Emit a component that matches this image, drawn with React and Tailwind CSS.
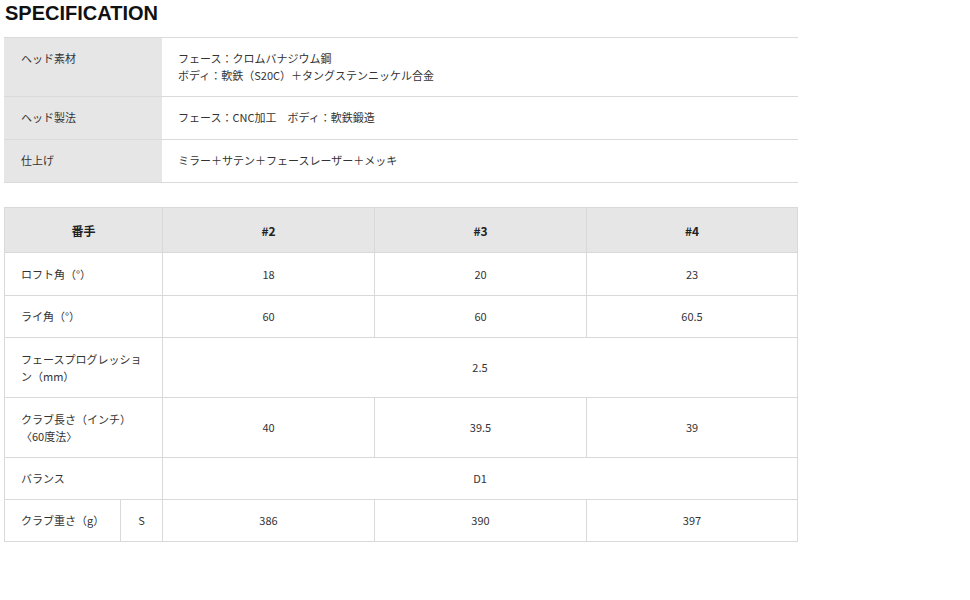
import React from 'react';

const font = { fontFamily: '"Noto Sans CJK JP", "Noto Sans", sans-serif' };

const headRows = [
  { label: 'ヘッド素材', lines: ['フェース：クロムバナジウム鋼', 'ボディ：軟鉄（S20C）＋タングステンニッケル合金'] },
  { label: 'ヘッド製法', lines: ['フェース：CNC加工　ボディ：軟鉄鍛造'] },
  { label: '仕上げ', lines: ['ミラー＋サテン＋フェースレーザー＋メッキ'] },
];

const Cell = ({ className = '', children }) => (
  <div className={`bg-white flex items-center ${className}`}>{children}</div>
);

export default function App() {
  return (
    <div className="w-[970px] min-h-[600px] bg-white pl-[4px] text-[11px] text-[#333]" style={font}>
      <div className="h-[37px] pl-[1px] pt-[2px]">
        <h1 className="text-[20px] leading-[22px] font-bold text-[#111]" style={{ fontFamily: '"Liberation Sans", Arial, sans-serif' }}>
          SPECIFICATION
        </h1>
      </div>

      <div className="w-[794px] border-t border-[#dadada]">
        {headRows.map(row => (
          <div key={row.label} className={`flex border-b border-[#dadada] ${row.lines.length > 1 ? '' : 'min-h-[43px]'}`}>
            <div className="w-[158px] shrink-0 bg-[#e6e6e6] pl-[17px] py-[12px] leading-[17px]">{row.label}</div>
            <div className="flex-1 pl-[16px] py-[12px] leading-[17px]">
              {row.lines.map(l => <div key={l}>{l}</div>)}
            </div>
          </div>
        ))}
      </div>

      <div className="mt-[24px] w-[794px] border border-[#d9d9d9] bg-[#d9d9d9] grid gap-px grid-cols-[115px_41px_211px_211px_210px] grid-rows-[44px_42px_41px_59px_59px_41px_41px] leading-[17px]">
        <Cell className="col-span-2 justify-center !bg-[#e6e6e6] font-bold text-[12px] text-[#222]">番手</Cell>
        <Cell className="justify-center !bg-[#e6e6e6] font-bold text-[12px] text-[#222]">#2</Cell>
        <Cell className="justify-center !bg-[#e6e6e6] font-bold text-[12px] text-[#222]">#3</Cell>
        <Cell className="justify-center !bg-[#e6e6e6] font-bold text-[12px] text-[#222]">#4</Cell>

        <Cell className="col-span-2 pl-[16px]">ロフト角（°）</Cell>
        <Cell className="justify-center">18</Cell>
        <Cell className="justify-center">20</Cell>
        <Cell className="justify-center">23</Cell>

        <Cell className="col-span-2 pl-[16px]">ライ角（°）</Cell>
        <Cell className="justify-center">60</Cell>
        <Cell className="justify-center">60</Cell>
        <Cell className="justify-center">60.5</Cell>

        <Cell className="col-span-2 pl-[16px] pr-[16px]">
          <span>フェースプログレッショ<br />ン（mm）</span>
        </Cell>
        <Cell className="col-span-3 justify-center">2.5</Cell>

        <Cell className="col-span-2 pl-[16px]">
          <span>クラブ長さ（インチ）<br />〈60度法〉</span>
        </Cell>
        <Cell className="justify-center">40</Cell>
        <Cell className="justify-center">39.5</Cell>
        <Cell className="justify-center">39</Cell>

        <Cell className="col-span-2 pl-[16px]">バランス</Cell>
        <Cell className="col-span-3 justify-center">D1</Cell>

        <Cell className="pl-[16px]">クラブ重さ（g）</Cell>
        <Cell className="justify-center">S</Cell>
        <Cell className="justify-center">386</Cell>
        <Cell className="justify-center">390</Cell>
        <Cell className="justify-center">397</Cell>
      </div>
    </div>
  );
}
